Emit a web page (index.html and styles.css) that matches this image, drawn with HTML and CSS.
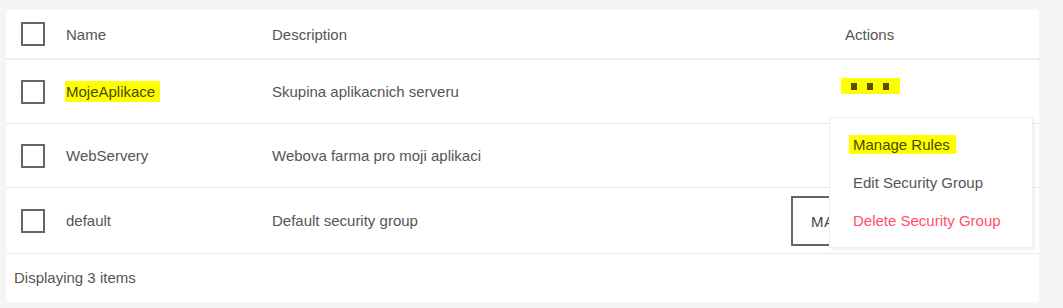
FILE: index.html
```html
<!DOCTYPE html>
<html lang="en">
<head>
    <meta charset="UTF-8">
    <title>Security Groups</title>
    <link rel="stylesheet" href="styles.css">
</head>
<body>
    <div class="panel">
        <!-- Table header -->
        <div class="row header">
            <div class="cell check"><span class="box"></span></div>
            <div class="cell">Name</div>
            <div class="cell">Description</div>
            <div class="cell">Actions</div>
        </div>
        <!-- Security group rows -->
        <div class="row">
            <div class="cell check"><span class="box"></span></div>
            <div class="cell"><span class="mark name-mark">MojeAplikace</span></div>
            <div class="cell">Skupina aplikacnich serveru</div>
            <div class="cell actions">
                <span class="dots"><i></i><i></i><i></i></span>
                <!-- Open actions menu -->
                <ul class="menu">
                    <li><span class="mark menu-mark">Manage Rules</span></li>
                    <li>Edit Security Group</li>
                    <li class="danger">Delete Security Group</li>
                </ul>
            </div>
        </div>
        <div class="row">
            <div class="cell check"><span class="box"></span></div>
            <div class="cell">WebServery</div>
            <div class="cell">Webova farma pro moji aplikaci</div>
            <div class="cell"></div>
        </div>
        <div class="row last">
            <div class="cell check"><span class="box"></span></div>
            <div class="cell">default</div>
            <div class="cell">Default security group</div>
            <div class="cell"><button class="btn"><span class="btn-label">MANAGE RULES</span></button></div>
        </div>
        <div class="footer">Displaying 3 items</div>
    </div>
</body>
</html>
```

FILE: styles.css
```css
/* Page background */
body, html {
    margin: 0;
    font-family: 'Liberation Sans', Arial, sans-serif;
    font-size: 15px;
    color: #555;
    background-color: #f5f5f5;
}
/* White card holding the table */
.panel {
    margin: 10px 0 0 6px;
    width: 1033px;
    height: 292px;
    background: #fff;
}
/* Each table row is a grid */
.row {
    display: grid;
    grid-template-columns: 60px 206px 573px 194px;
    align-items: center;
    height: 63px;
    border-bottom: 1px solid #ebebeb;
}
.row.header {
    height: 48px;
    border-bottom: 2px solid #eee;
}
.row.last {
    height: 65px;
}
.cell {
    white-space: nowrap;
}
.check {
    padding-left: 15px;
    display: flex;
}
/* Checkbox square */
.box {
    width: 20px;
    height: 20px;
    border: 2px solid #666;
}
/* Yellow highlighting */
.mark {
    background: #ffff00;
    color: #4a4a00;
}
.name-mark {
    padding: 2px 5px 2px 0;
    margin-left: -1px;
    padding-left: 1px;
}
.menu-mark {
    padding: 1px 6px 1px 4px;
    margin-left: -4px;
}
.actions {
    position: relative;
    display: flex;
}
/* The three dots menu trigger */
.dots {
    display: inline-flex;
    gap: 10px;
    background: #ffff00;
    padding: 5px 11px 4px 10px;
    margin-left: -4px;
    margin-top: -12px;
}
.dots i {
    width: 6px;
    height: 7px;
    background: #545000;
}
/* Dropdown menu */
.menu {
    position: absolute;
    top: 27px;
    left: -16px;
    width: 202px;
    margin: 0;
    padding: 8px 0 7px;
    list-style: none;
    background: #fff;
    border: 1px solid #eee;
    box-shadow: 2px 2px 3px rgba(0,0,0,0.06);
    z-index: 2;
}
.menu li {
    height: 38px;
    line-height: 38px;
    padding-left: 23px;
}
.menu .danger {
    color: #ff4f66;
}
/* Button partly covered by the menu */
.btn {
    margin-left: -54px;
    margin-top: 1px;
    width: 150px;
    height: 50px;
    padding: 0 18px;
    text-align: left;
    background: #fff;
    border: 2px solid #666;
    font-family: inherit;
    font-size: 15px;
    color: #444;
    letter-spacing: 0.5px;
}
.btn-label {
    display: inline-block;
    width: 18px;
    overflow: hidden;
    vertical-align: middle;
}
.footer {
    padding-left: 8px;
    height: 48px;
    line-height: 48px;
}
```
